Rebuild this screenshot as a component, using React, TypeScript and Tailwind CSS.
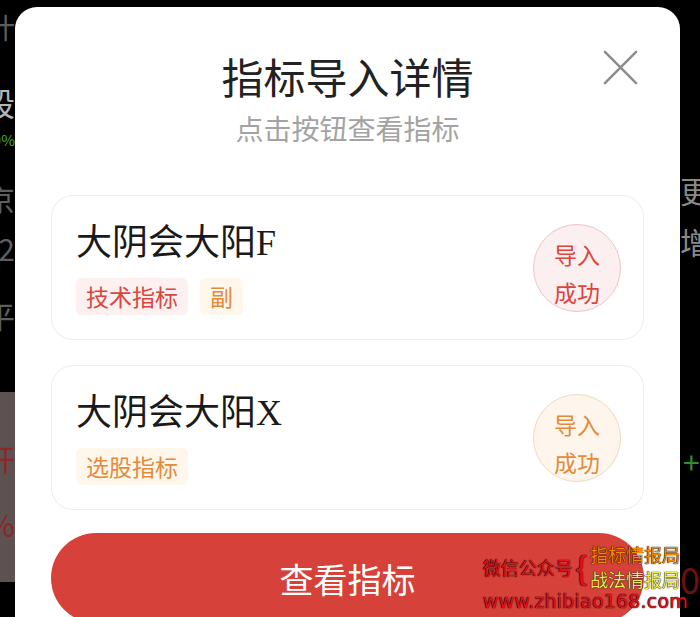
import React from "react";

const cjk = "font-['Noto_Sans_CJK_SC','Noto_Sans',sans-serif]";

type Tone = "red" | "orange";

const tagTone: Record<Tone, string> = {
  red: "bg-[#fdf0f0] text-[#d9463f]",
  orange: "bg-[#fff6ec] text-[#e38b3b]",
};

const badgeTone: Record<Tone, string> = {
  red: "bg-[#fcefef] border-[#ecc6c9] text-[#d9463f]",
  orange: "bg-[#fef6ed] border-[#f4d8b8] text-[#e38b3b]",
};

function Frag({ h, children, cls, end }: { h: string; children: React.ReactNode; cls: string; end?: boolean }) {
  return (
    <div className={`flex overflow-hidden ${h} items-center ${end ? "justify-end" : "justify-start"}`}>
      <span className={`shrink-0 whitespace-nowrap leading-none ${cls}`}>{children}</span>
    </div>
  );
}

function IndicatorCard({
  name,
  suffix,
  tags,
  tone,
}: {
  name: string;
  suffix: string;
  tags: { label: string; tone: Tone }[];
  tone: Tone;
}) {
  return (
    <div className="flex items-center justify-between rounded-[22px] border border-[#ececec] bg-white pl-6 pr-[22px] pt-[21px] pb-[24px]">
      <div className="flex flex-col gap-[13px]">
        <div className="text-[36px] leading-[44px] text-[#1a1a1a]">
          {name}
          <span className="font-['Liberation_Serif',serif]">{suffix}</span>
        </div>
        <div className="flex gap-3">
          {tags.map((t) => (
            <span
              key={t.label}
              className={`h-[37px] rounded-md px-[10px] text-[23px] leading-[37px] ${tagTone[t.tone]}`}
            >
              {t.label}
            </span>
          ))}
        </div>
      </div>
      <div
        className={`mt-1 flex h-[88px] w-[88px] flex-col items-center justify-center rounded-full border pt-[9px] text-[23px] leading-[38px] ${badgeTone[tone]}`}
      >
        <span>导入</span>
        <span>成功</span>
      </div>
    </div>
  );
}

export default function App() {
  return (
    <div className={`relative flex h-[617px] w-[700px] overflow-hidden bg-black ${cjk}`}>
      {/* page behind the dialog, left edge */}
      <div className="flex w-[15px] shrink-0 flex-col">
        <Frag h="h-[50px] mt-[2px]" end cls="text-[28px] text-[#5c5c5c]">设计</Frag>
        <Frag h="h-[40px] mt-[30px]" end cls="text-[32px] text-[#b5b5b5]">阶段</Frag>
        <Frag h="h-[22px] mt-[6px]" end cls="text-[15px] text-[#3fae2a]">0%</Frag>
        <Frag h="h-[36px] mt-[30px]" end cls="text-[30px] text-[#5e5e5e]">北京</Frag>
        <Frag h="h-[36px] mt-[14px]" end cls="text-[30px] text-[#5e5e5e]">12</Frag>
        <Frag h="h-[34px] mt-[32px]" end cls="text-[30px] text-[#5e5e5e]">水平</Frag>
        <div className="mt-[60px] flex h-[190px] flex-col bg-[#5d5251]">
          <Frag h="h-[36px] mt-[48px]" end cls="text-[30px] text-[#8e2626]">展开</Frag>
          <Frag h="h-[36px] mt-[30px]" end cls="text-[30px] text-[#8e2626]">5%</Frag>
        </div>
      </div>

      {/* dialog */}
      <div className="relative mt-[7px] flex w-[665px] shrink-0 flex-col rounded-t-[22px] bg-white px-9">
        <button className="absolute right-[42px] top-[43px] flex h-[35px] w-[35px] items-center justify-center text-[#8c8c8c]">
          <svg width="37" height="37" viewBox="0 0 37 37" fill="none" stroke="currentColor" strokeWidth="2.6" strokeLinecap="round">
            <path d="M2 2L35 35M35 2L2 35" />
          </svg>
        </button>

        <div className="mt-[44px] text-center text-[42px] leading-[50px] text-[#222]">指标导入详情</div>
        <div className="mt-[9px] text-center text-[28px] leading-[36px] text-[#a3a3a3]">点击按钮查看指标</div>

        <div className="mt-[49px] flex flex-col gap-[25px]">
          <IndicatorCard
            name="大阴会大阳"
            suffix="F"
            tone="red"
            tags={[
              { label: "技术指标", tone: "red" },
              { label: "副", tone: "orange" },
            ]}
          />
          <IndicatorCard
            name="大阴会大阳"
            suffix="X"
            tone="orange"
            tags={[{ label: "选股指标", tone: "orange" }]}
          />
        </div>

        <button className="mt-[23px] h-[90px] shrink-0 rounded-full bg-[#d6413a] text-[34px] text-white">
          查看指标
        </button>
      </div>

      {/* page behind the dialog, right edge */}
      <div className="flex w-[20px] shrink-0 flex-col">
        <Frag h="h-[34px] mt-[173px]" cls="text-[30px] text-[#8a8a8a]">更多</Frag>
        <Frag h="h-[34px] mt-[17px]" cls="text-[30px] text-[#8a8a8a]">增加</Frag>
        <Frag h="h-[34px] mt-[186px]" cls="pl-[3px] text-[30px] text-[#2f8f2a]">+2</Frag>
        <Frag h="h-[40px] mt-[80px]" cls="text-[36px] text-[#6e1010]">0</Frag>
      </div>

      {/* watermark */}
      <div className="absolute bottom-[6px] right-[12px] flex flex-col text-[18px] leading-none [text-shadow:0_0_1px_#000,0_0_1px_#000]">
        <div className="flex items-center">
          <span className="text-[#e4101b]">微信公众号</span>
          <span className="mx-[3px] text-[34px] font-['Liberation_Sans',sans-serif] font-thin text-[#e4101b]">{"{"}</span>
          <div className="flex flex-col gap-[7px]">
            <span className="text-[#f08a00]">指标情报局</span>
            <span className="text-[#eeee5a]">战法情报局</span>
          </div>
        </div>
        <div className="mt-[4px] font-['DejaVu_Sans',sans-serif] text-[19px] text-[#e4101b] tracking-[0.2px]">
          www.zhibiao168.com
        </div>
      </div>
    </div>
  );
}
